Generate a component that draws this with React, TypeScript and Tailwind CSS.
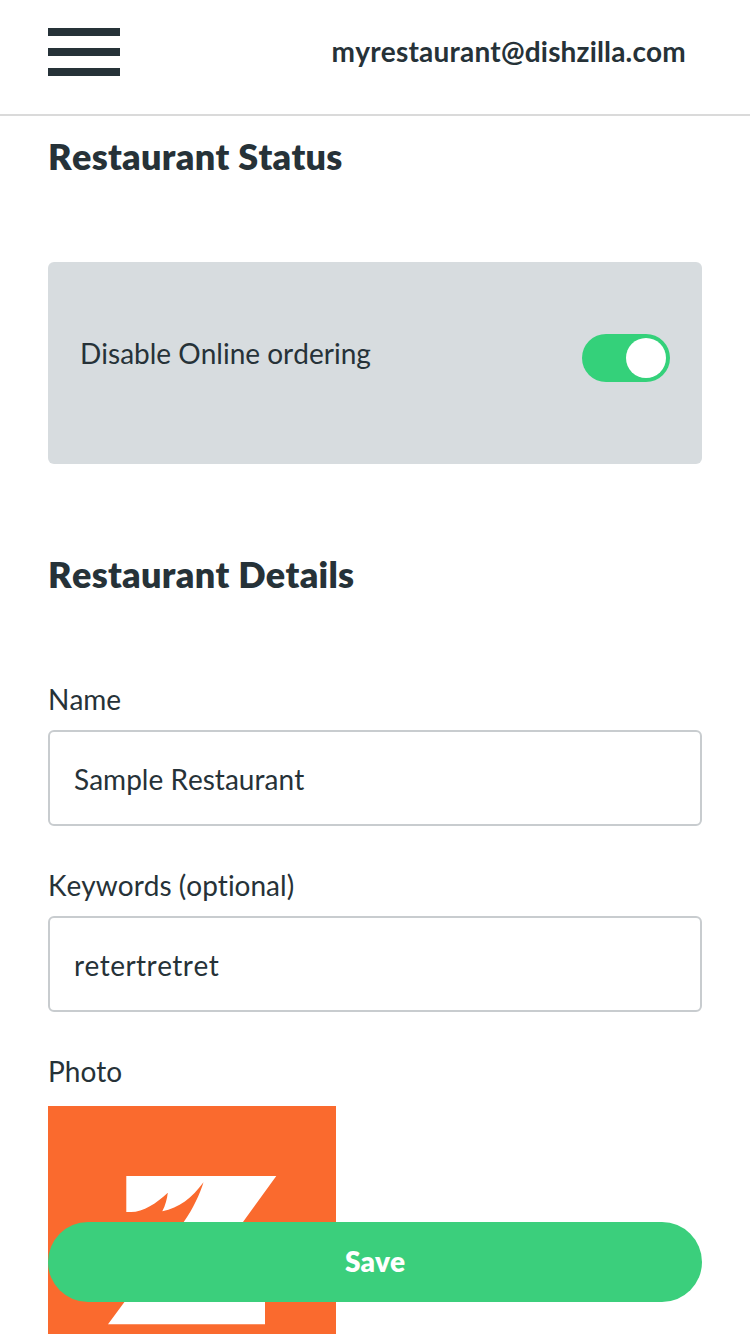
import { useState } from "react";

type FieldProps = { label: string; value: string; onChange: (v: string) => void; className?: string };

function Field({ label, value, onChange, className = "" }: FieldProps) {
  return (
    <label className="block h-[186px]">
      <span className="block h-[50px] pt-[2px] text-[28px] leading-[34px]">{label}</span>
      <input
        className={`block h-24 w-full rounded-md border-2 border-[#c8cccf] bg-white px-6 pt-[2px] text-[28px] outline-none ${className}`}
        value={value}
        onChange={(e) => onChange(e.target.value)}
      />
    </label>
  );
}

function Logo() {
  return (
    <svg className="block size-72 shrink-0" viewBox="0 0 288 288">
      <rect width="288" height="288" fill="#fa6a2e" />
      <path
        d="M78.3 70H228.3L166 156H217V218.3H60L106 156C118 141 128 130 135.7 116C145 103 152 88 155.5 76.3C144 92 131 102 114.3 105.3C117.5 99 119 93 119.8 86.7C109 97 95 106 83 106H78.3Z"
        fill="white"
      />
    </svg>
  );
}

export default function App() {
  const [name, setName] = useState("Sample Restaurant");
  const [keywords, setKeywords] = useState("retertretret");
  const [disabled, setDisabled] = useState(true);

  return (
    <div className="relative flex h-[1334px] w-[750px] flex-col overflow-hidden bg-white font-['Lato',sans-serif] text-[28px] text-[#263238] [font-kerning:none] [font-variant-ligatures:none]">
      <header className="flex h-[116px] shrink-0 items-start justify-between border-b-2 border-[#dadada] pt-7 pr-16 pl-12">
        <button aria-label="Menu" className="flex w-18 flex-col gap-3">
          <span className="h-2 bg-[#263238]" />
          <span className="h-2 bg-[#263238]" />
          <span className="h-2 bg-[#263238]" />
        </button>
        <span className="pt-[6px] text-[28px] leading-[34px] font-bold tracking-[0.18px]">
          myrestaurant@dishzilla.com
        </span>
      </header>

      <main className="flex flex-col px-12">
        <h2 className="mt-[18px] text-[36px] leading-[44px] font-extrabold tracking-[0.28px]">Restaurant Status</h2>
        <section className="mt-[84px] flex h-[202px] items-start justify-between rounded-md bg-[#d7dcdf] px-8 pt-18">
          <span className="pt-[2px] leading-[34px]">Disable Online ordering</span>
          <button
            role="switch"
            aria-checked={disabled}
            aria-label="Disable Online ordering"
            onClick={() => setDisabled(!disabled)}
            className={`flex h-12 w-22 items-center rounded-full p-1 ${disabled ? "justify-end bg-[#34d17a]" : "justify-start bg-gray-400"}`}
          >
            <span className="size-10 rounded-full bg-white" />
          </button>
        </section>

        <h2 className="mt-[88px] mb-[84px] text-[36px] leading-[44px] font-extrabold tracking-[0.28px]">
          Restaurant Details
        </h2>
        <Field label="Name" value={name} onChange={setName} />
        <Field label="Keywords (optional)" value={keywords} onChange={setKeywords} className="tracking-[0.42px]" />
        <span className="h-[54px] shrink-0 pt-[2px] leading-[34px]">Photo</span>
        <Logo />
      </main>

      <button className="absolute inset-x-12 bottom-8 h-20 rounded-full bg-[#3bcf7c] pb-[2px] text-[28px] font-extrabold text-white">
        Save
      </button>
    </div>
  );
}
